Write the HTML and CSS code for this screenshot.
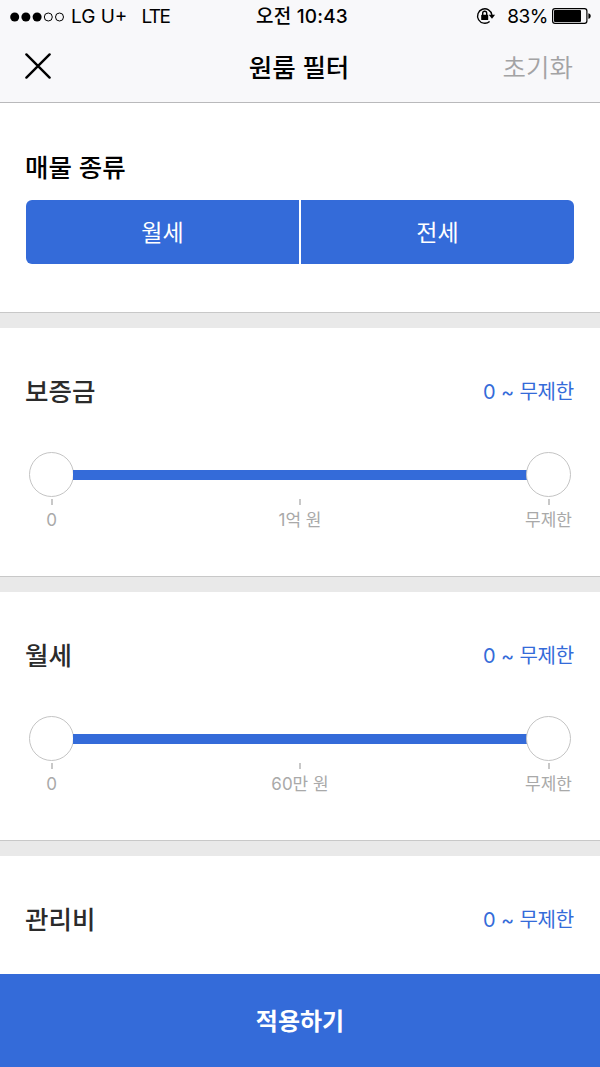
FILE: index.html
```html
<!DOCTYPE html>
<html lang="ko">
<head>
    <meta charset="UTF-8">
    <meta name="viewport" content="width=device-width, initial-scale=1.0">
    <title>원룸 필터</title>
    <link rel="stylesheet" href="styles.css">
</head>
<body>

    <div class="screen">
        <header class="header">
            <div class="status-bar">
                <div class="status-left">
                    <svg class="signal" width="54" height="10" viewBox="0 0 54 10">
                        <circle cx="4.7" cy="5" r="4.5"/>
                        <circle cx="15.9" cy="5" r="4.5"/>
                        <circle cx="27.1" cy="5" r="4.5"/>
                        <circle class="empty" cx="38.3" cy="5" r="4"/>
                        <circle class="empty" cx="49.5" cy="5" r="4"/>
                    </svg>
                    <span class="carrier">LG U+</span>
                    <span class="network">LTE</span>
                </div>
                <div class="clock">오전 10:43</div>
                <div class="status-right">
                    <svg class="lock" width="20" height="18" viewBox="0 0 20 18">
                        <path class="ring" d="M13.6 14.4A7.2 7.2 0 1 1 15.9 8"/>
                        <path d="M12.7 7.8h6.4L16 11.8z"/>
                        <rect x="5.2" y="7.8" width="7" height="5.2" rx=".6"/>
                        <path class="shackle" d="M6.7 8V6.3a2 2 0 0 1 4 0V8"/>
                    </svg>
                    <span class="percent">83%</span>
                    <svg class="battery" width="39" height="16" viewBox="0 0 39 16">
                        <rect class="case" x=".6" y=".6" width="34.3" height="14.8" rx="2.4"/>
                        <rect x="2" y="2" width="27" height="12" rx="1"/>
                        <path d="M36.4 5.2c1.6.4 2.3 1.4 2.3 2.8s-.7 2.4-2.3 2.8z"/>
                    </svg>
                </div>
            </div>
            <div class="navbar">
                <button class="close" aria-label="닫기">
                    <svg width="26" height="26" viewBox="0 0 26 26">
                        <path d="M1.4 1.4l23.2 23.2M24.6 1.4L1.4 24.6"/>
                    </svg>
                </button>
                <h1>원룸 필터</h1>
                <button class="reset">초기화</button>
            </div>
        </header>

        <main class="filters">
            <section class="filter filter-type">
                <h2>매물 종류</h2>
                <div class="segmented">
                    <button>월세</button>
                    <button>전세</button>
                </div>
            </section>

            <section class="filter">
                <div class="filter-head">
                    <h2>보증금</h2>
                    <span class="value">0 ~ 무제한</span>
                </div>
                <div class="slider">
                    <span class="thumb"></span>
                    <span class="track"></span>
                    <span class="thumb"></span>
                </div>
                <div class="scale">
                    <span>0</span>
                    <span>1억 원</span>
                    <span>무제한</span>
                </div>
            </section>

            <section class="filter">
                <div class="filter-head">
                    <h2>월세</h2>
                    <span class="value">0 ~ 무제한</span>
                </div>
                <div class="slider">
                    <span class="thumb"></span>
                    <span class="track"></span>
                    <span class="thumb"></span>
                </div>
                <div class="scale">
                    <span>0</span>
                    <span>60만 원</span>
                    <span>무제한</span>
                </div>
            </section>

            <section class="filter">
                <div class="filter-head">
                    <h2>관리비</h2>
                    <span class="value">0 ~ 무제한</span>
                </div>
            </section>
        </main>

        <button class="apply">적용하기</button>
    </div>

</body>
</html>
```
FILE: styles.css
```css
/* Global styles */
* {
    box-sizing: border-box;
}

body {
    margin: 0;
    font-family: Inter, 'Noto Sans CJK KR', sans-serif;
    background-color: #fff;
    color: #2b2b2b;
}

button {
    margin: 0;
    padding: 0;
    border: none;
    background: none;
    font-family: inherit;
    cursor: pointer;
}

h1, h2 {
    margin: 0;
    font-weight: 500;
}

.screen {
    display: flex;
    flex-direction: column;
    height: 1067px;
    overflow: hidden;
}

/* Header */
.header {
    flex: none;
    height: 103px;
    background-color: #f8f8fa;
    border-bottom: 1px solid #b9b9bb;
    color: #000;
}

.status-bar {
    display: grid;
    grid-template-columns: 1fr auto 1fr;
    align-items: center;
    height: 32px;
    padding: 0 9px 0 10px;
    font-size: 19px;
    line-height: 32px;
}

.status-left,
.status-right {
    display: flex;
    align-items: center;
}

.status-left {
    padding-top: 1px;
}

.status-right {
    justify-content: flex-end;
}

.signal .empty {
    fill: none;
    stroke: #000;
}

.carrier {
    margin-left: 7px;
}

.network {
    margin-left: 14px;
    letter-spacing: -1.5px;
}

.clock {
    padding: 1px 0 0 3px;
    font-weight: 500;
    letter-spacing: 0.2px;
}

.lock {
    margin-bottom: 1px;
}

.percent {
    margin: 1px 4px 0 11px;
    letter-spacing: -0.5px;
}

.battery {
    margin-bottom: 1px;
}

.lock .ring,
.lock .shackle {
    fill: none;
    stroke: #000;
    stroke-width: 1.4;
}

.battery .case {
    fill: none;
    stroke: #000;
    stroke-width: 1.2;
}

.navbar {
    display: grid;
    grid-template-columns: 1fr auto 1fr;
    align-items: center;
    height: 70px;
    padding: 0 27px 0 25px;
}

.close {
    justify-self: start;
    display: flex;
    margin-bottom: 2px;
}

.close path {
    stroke: #000;
    stroke-width: 2.4;
    stroke-linecap: round;
}

.navbar h1 {
    padding-top: 1px;
    font-size: 25.5px;
    line-height: 36px;
}

.reset {
    justify-self: end;
    padding-top: 1px;
    font-size: 25.5px;
    line-height: 36px;
    color: #a3a3a4;
    font-weight: 350;
}

/* Filter sections */
.filters {
    flex: 1;
    min-height: 0;
    overflow: hidden;
}

.filter {
    height: 264px;
    padding: 44px 26px 0 25px;
    border-bottom: 15px solid #e9e9e9;
    box-shadow: inset 0 -1px #c8c8c8;
}

.filter h2 {
    font-size: 25.5px;
    line-height: 40px;
}

.filter-type {
    height: 225px;
    padding-top: 45px;
}

.filter-type h2 {
    color: #000;
}

.filter-head {
    display: flex;
    justify-content: space-between;
    align-items: center;
}

.value {
    font-size: 20px;
    line-height: 40px;
    letter-spacing: -0.2px;
    color: #346bd9;
}

.segmented {
    display: grid;
    grid-template-columns: 1fr 1fr;
    gap: 2px;
    height: 64px;
    margin: 12px 0 0 1px;
    border-radius: 6px;
    overflow: hidden;
}

.segmented button {
    padding-bottom: 3px;
    background-color: #346bd9;
    color: #fff;
    font-size: 23px;
}

/* Range slider */
.slider {
    display: flex;
    align-items: center;
    margin: 40px 3px 0 4px;
}

.thumb {
    width: 45px;
    height: 45px;
    border: 1.5px solid #c4c4c4;
    border-radius: 50%;
    background-color: #fff;
}

.track {
    flex: 1;
    height: 10px;
    margin: 0 -1px;
    background-color: #346bd9;
}

.scale {
    display: flex;
    justify-content: space-between;
    margin: 2px 3px 0 4px;
    font-size: 17px;
    line-height: 30px;
    color: #a9a9a9;
}

.scale span {
    display: flex;
    flex-direction: column;
    align-items: center;
    width: 45px;
    white-space: nowrap;
}

.scale span::before {
    content: "";
    width: 2px;
    height: 6px;
    background-color: #c8c8c8;
}

/* Bottom button */
.apply {
    flex: none;
    height: 93px;
    padding-bottom: 2px;
    background-color: #346bd9;
    color: #fff;
    font-size: 24px;
    font-weight: 700;
}
```
